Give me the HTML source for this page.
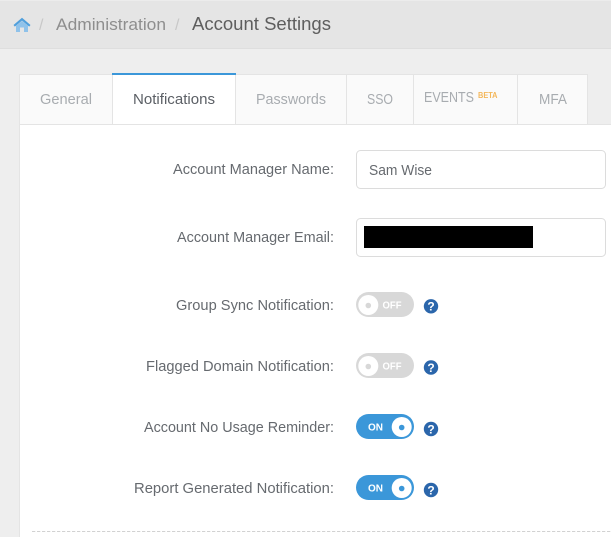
<!DOCTYPE html>
<html><head><meta charset="utf-8"><style>
html,body{margin:0;padding:0;background:#eee}
body{width:611px;height:537px;overflow:hidden;position:relative}
svg{position:absolute;left:0;top:0;display:block}
text{font-family:"Liberation Sans",sans-serif}
.l{font-size:14.5px;fill:#666a6f}
.t{font-size:14.5px;fill:#a8acb0}
</style></head><body>
<svg width="611" height="537" viewBox="0 0 611 537">
<rect width="611" height="537" fill="#eeeeee"/>
<rect y="0" width="611" height="48" fill="#e5e5e5"/>
<rect y="0" width="611" height="1" fill="#ececec"/>
<rect y="48" width="611" height="1" fill="#dedede"/>
<!-- home -->
<path d="M13.5 25 L22 17.8 L30.5 25 L29.2 26.6 L22 20.6 L14.8 26.6 Z" fill="#4f9fdc"/>
<path d="M16 25.8 L22 21 L28 25.8 V32 H24 V27.5 H20 V32 H16 Z" fill="#8fc2ea"/>
<text x="39" y="30" font-size="16" fill="#c8c8c8">/</text>
<text x="56" y="30" font-size="17" fill="#8e8e8e" textLength="110" lengthAdjust="spacingAndGlyphs">Administration</text>
<text x="175" y="30" font-size="16" fill="#c8c8c8">/</text>
<text x="192" y="30" font-size="18" fill="#5e5e5e" textLength="139" lengthAdjust="spacingAndGlyphs">Account Settings</text>
<!-- panel -->
<rect x="19" y="124" width="592" height="413" fill="#e4e4e4"/>
<rect x="20" y="125" width="591" height="412" fill="#ffffff"/>
<!-- tabs -->
<g fill="#fafafa" stroke="#e4e4e4" stroke-width="1">
<rect x="19.5" y="74.5" width="93" height="50"/>
<rect x="235.5" y="74.5" width="111" height="50"/>
<rect x="346.5" y="74.5" width="67" height="50"/>
<rect x="413.5" y="74.5" width="104" height="50"/>
<rect x="517.5" y="74.5" width="70" height="50"/>
</g>
<rect x="112.5" y="74.5" width="123" height="50" fill="#fff" stroke="#e4e4e4"/>
<rect x="112" y="73" width="124" height="2" fill="#3b97d9"/>
<text class="t" x="40" y="104" textLength="52" lengthAdjust="spacingAndGlyphs">General</text>
<text x="133" y="104" font-size="14.5" fill="#5c6066" textLength="82" lengthAdjust="spacingAndGlyphs">Notifications</text>
<text class="t" x="256" y="104" textLength="70" lengthAdjust="spacingAndGlyphs">Passwords</text>
<text class="t" x="367" y="104" textLength="26" lengthAdjust="spacingAndGlyphs">SSO</text>
<text class="t" x="424" y="102" textLength="50" lengthAdjust="spacingAndGlyphs">EVENTS</text>
<text x="478" y="98" font-size="8" font-weight="bold" fill="#f4b75a" textLength="19.5" lengthAdjust="spacingAndGlyphs">BETA</text>
<text class="t" x="539" y="104" textLength="28" lengthAdjust="spacingAndGlyphs">MFA</text>
<!-- labels -->
<text class="l" x="173" y="174" textLength="161" lengthAdjust="spacingAndGlyphs">Account Manager Name:</text>
<text class="l" x="177" y="242" textLength="157" lengthAdjust="spacingAndGlyphs">Account Manager Email:</text>
<text class="l" x="176" y="310" textLength="158" lengthAdjust="spacingAndGlyphs">Group Sync Notification:</text>
<text class="l" x="146" y="371" textLength="188" lengthAdjust="spacingAndGlyphs">Flagged Domain Notification:</text>
<text class="l" x="144" y="432" textLength="190" lengthAdjust="spacingAndGlyphs">Account No Usage Reminder:</text>
<text class="l" x="134" y="493" textLength="200" lengthAdjust="spacingAndGlyphs">Report Generated Notification:</text>
<!-- inputs -->
<rect x="356.5" y="150.5" width="249" height="38" rx="4" fill="#fff" stroke="#dcdcdc"/>
<text x="369" y="175" font-size="14.5" fill="#666a6f" textLength="63" lengthAdjust="spacingAndGlyphs">Sam Wise</text>
<rect x="356.5" y="218.5" width="249" height="38" rx="4" fill="#fff" stroke="#dcdcdc"/>
<rect x="364" y="226" width="169" height="22" fill="#000"/>
<!-- off toggles -->
<g>
<rect x="356" y="292" width="58" height="25" rx="12.5" fill="#d8d8d8"/>
<circle cx="368.3" cy="305" r="10" fill="#fff"/>
<circle cx="368.3" cy="305.5" r="2.8" fill="#d8d8d8"/>
<text x="382.5" y="308.5" font-size="10" font-weight="bold" fill="#fff" textLength="19" lengthAdjust="spacingAndGlyphs">OFF</text>
</g>
<g>
<rect x="356" y="353" width="58" height="25" rx="12.5" fill="#d8d8d8"/>
<circle cx="368.3" cy="366" r="10" fill="#fff"/>
<circle cx="368.3" cy="366.5" r="2.8" fill="#d8d8d8"/>
<text x="382.5" y="369.5" font-size="10" font-weight="bold" fill="#fff" textLength="19" lengthAdjust="spacingAndGlyphs">OFF</text>
</g>
<!-- on toggles -->
<g>
<rect x="356" y="414" width="58" height="25" rx="12.5" fill="#3b97d9"/>
<circle cx="401.7" cy="427" r="10" fill="#fff"/>
<circle cx="401.7" cy="427.5" r="2.8" fill="#3b97d9"/>
<text x="368" y="430.5" font-size="10" font-weight="bold" fill="#fff" textLength="15" lengthAdjust="spacingAndGlyphs">ON</text>
</g>
<g>
<rect x="356" y="475" width="58" height="25" rx="12.5" fill="#3b97d9"/>
<circle cx="401.7" cy="488" r="10" fill="#fff"/>
<circle cx="401.7" cy="488.5" r="2.8" fill="#3b97d9"/>
<text x="368" y="491.5" font-size="10" font-weight="bold" fill="#fff" textLength="15" lengthAdjust="spacingAndGlyphs">ON</text>
</g>
<!-- help -->
<g font-size="12" font-weight="bold" fill="#fff" text-anchor="middle">
<circle cx="431" cy="306.3" r="7.2" fill="#2b66ab"/><text x="431" y="310.6">?</text>
<circle cx="431" cy="367.5" r="7.2" fill="#2b66ab"/><text x="431" y="371.8">?</text>
<circle cx="431" cy="429" r="7.2" fill="#2b66ab"/><text x="431" y="433.3">?</text>
<circle cx="431" cy="490" r="7.2" fill="#2b66ab"/><text x="431" y="494.3">?</text>
</g>
<!-- dashed -->
<line x1="32" y1="531.5" x2="611" y2="531.5" stroke="#d2d2d2" stroke-dasharray="3.3 1.7"/>
</svg>
</body></html>
